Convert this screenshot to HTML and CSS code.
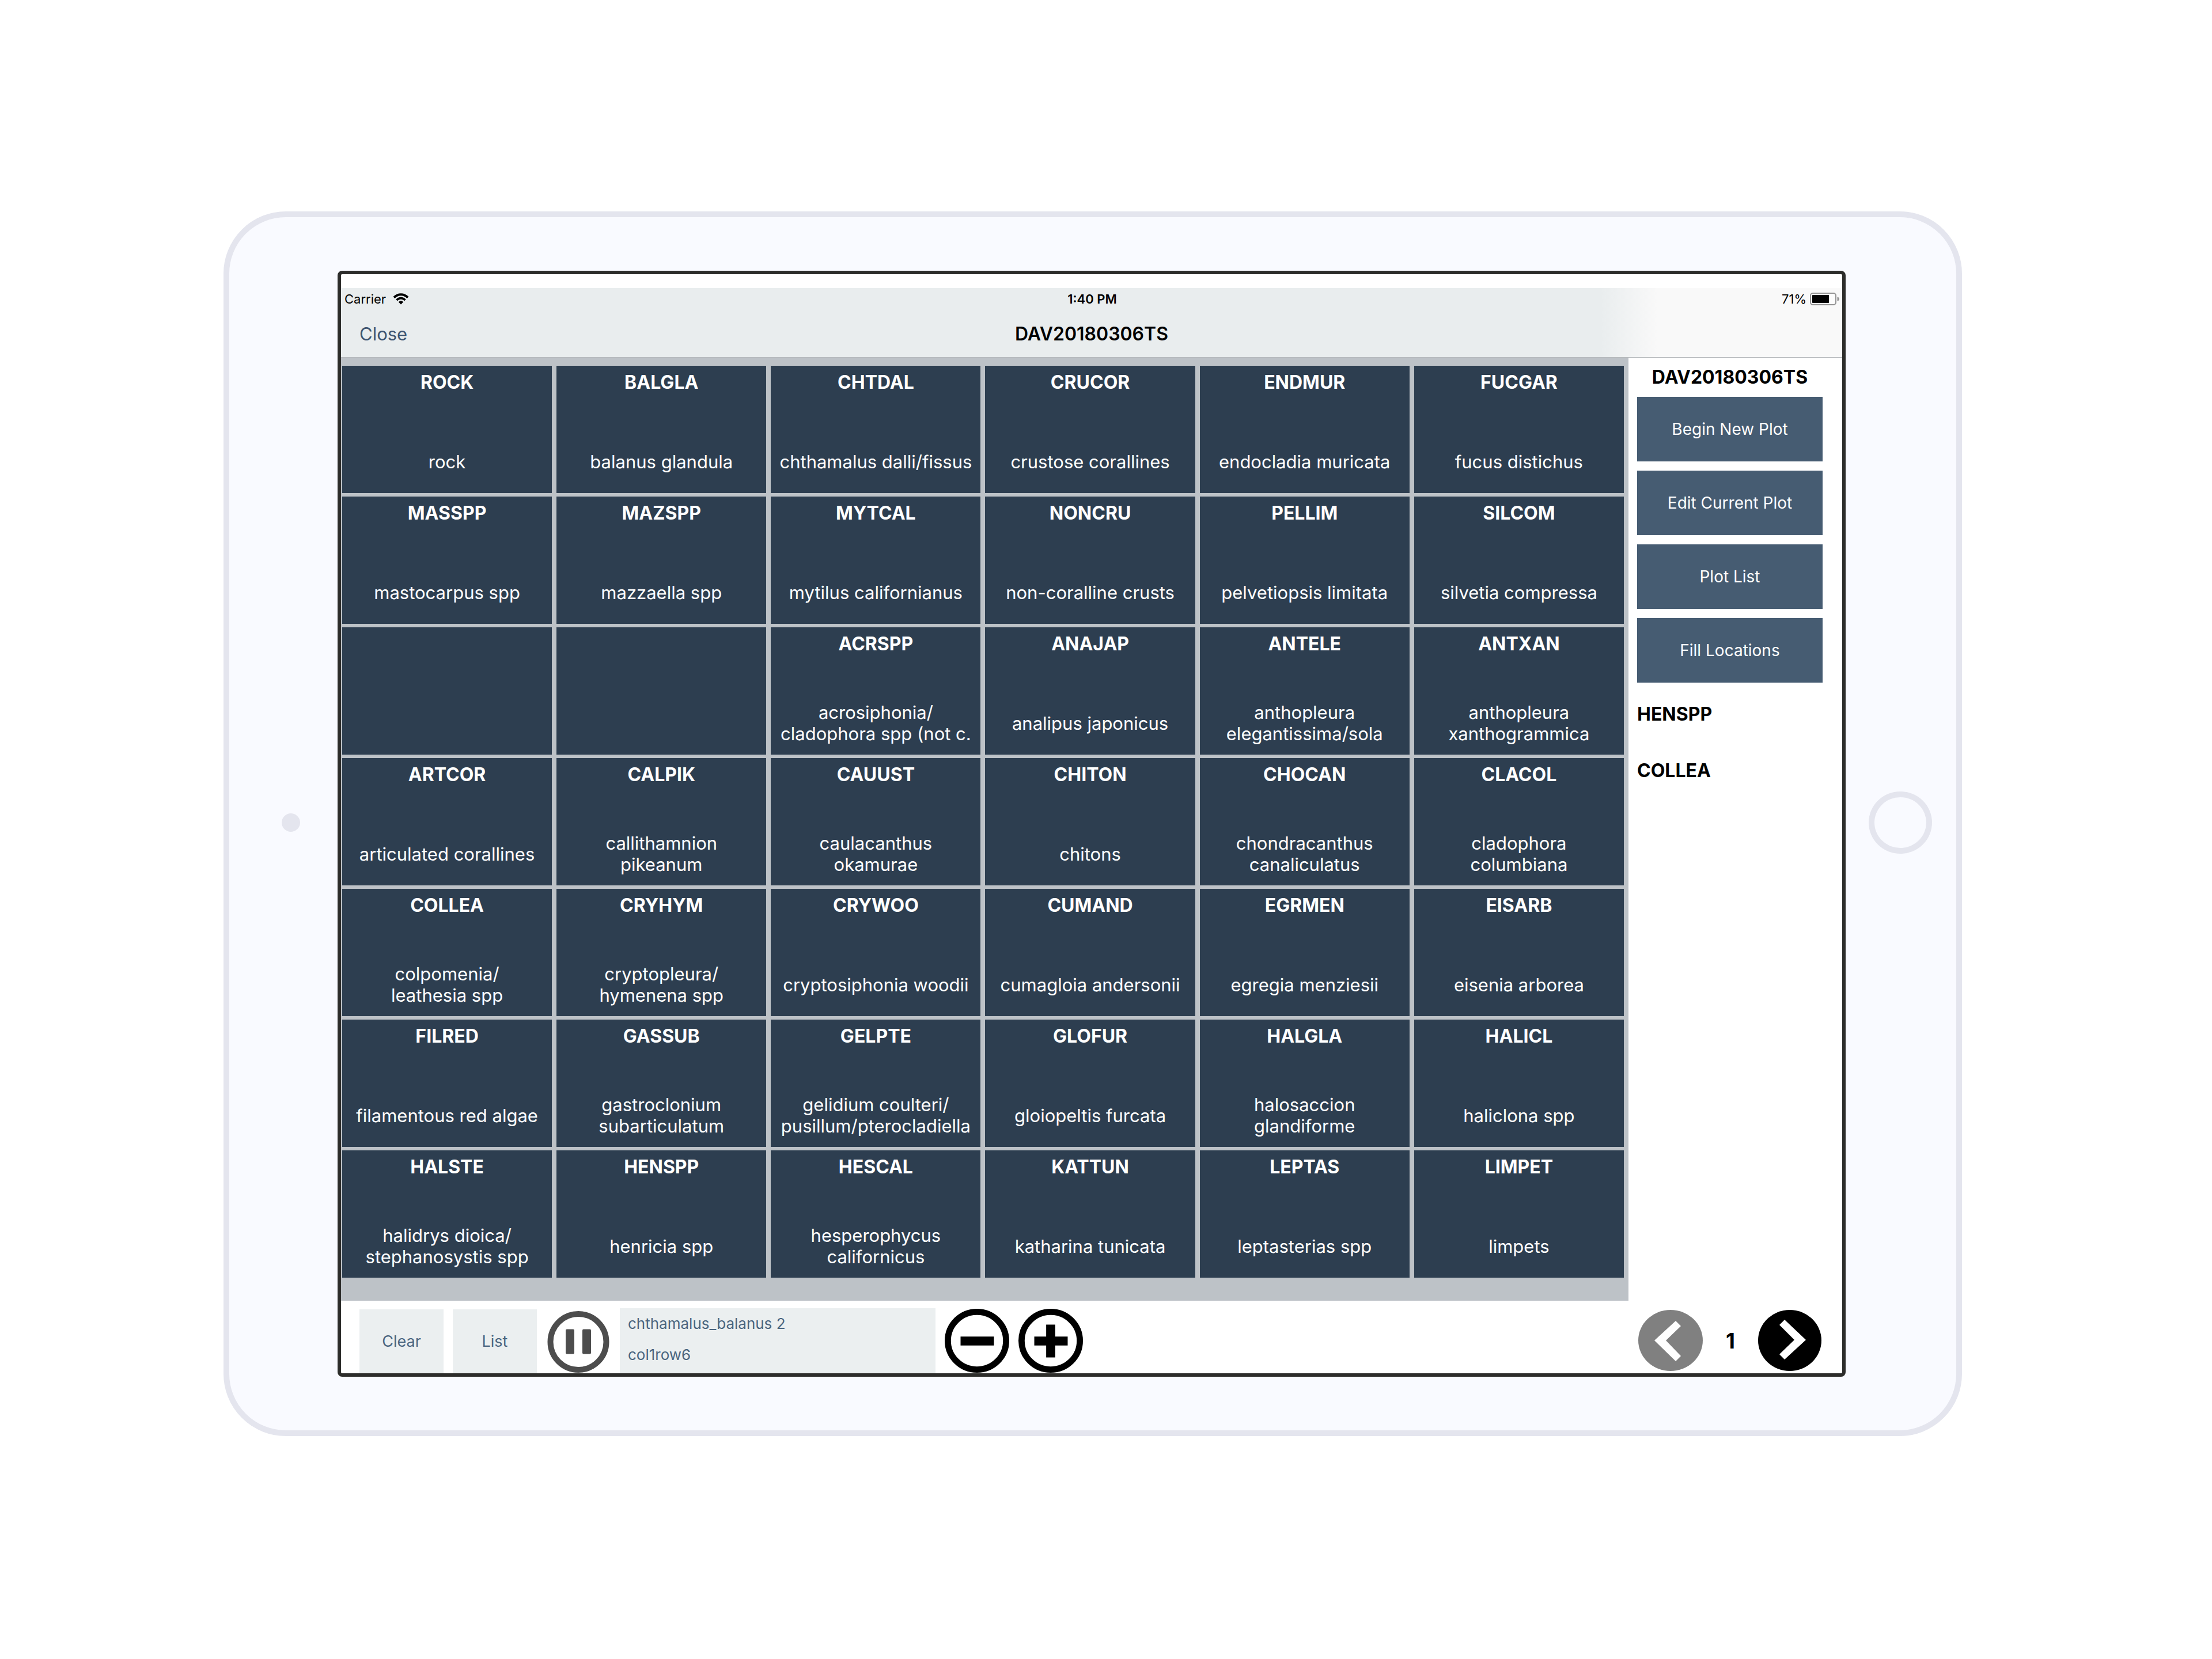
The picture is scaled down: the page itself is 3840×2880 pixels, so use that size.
FILE: index.html
```html
<!DOCTYPE html>
<html lang="en">
<head>
<meta charset="utf-8">
<title>DAV20180306TS</title>
<link rel="stylesheet" href="styles.css">
</head>
<body>
<div class="device">
  <div class="bezel bezel-left"><span class="camera"></span></div>
  <div class="screen">
    <header class="topbar">
      <div class="status">
        <div class="carrier">
          <span>Carrier</span>
          <svg class="wifi" viewBox="0 0 28 20" aria-hidden="true">
            <path d="M2 7.500C9 .5 19 .5 26 7.500" fill="none" stroke="#000" stroke-width="4"/>
            <path d="M6.500 12C11 7.500 17 7.500 21.500 12" fill="none" stroke="#000" stroke-width="3.600"/>
            <path d="M9.800 15.300C12 12.800 16 12.800 18.200 15.300L14 19.500Z" fill="#000"/>
          </svg>
        </div>
        <span class="clock">1:40 PM</span>
        <div class="power">
          <span>71%</span>
          <svg class="battery" viewBox="0 0 52 22" aria-hidden="true">
            <rect x="1" y="1" width="44" height="20" rx="4" fill="#fdfdfd" stroke="#939393" stroke-width="2"/>
            <rect x="4" y="4" width="29" height="14" rx="1" fill="#000"/>
            <path d="M47.500 7.500Q51 8 51 11T47.500 14.500Z" fill="#939393"/>
          </svg>
        </div>
      </div>
      <div class="nav">
        <button class="close" type="button">Close</button>
        <h1>DAV20180306TS</h1>
      </div>
    </header>

    <main class="content">
      <section class="tiles" aria-label="Species">
        <button class="tile" type="button"><strong>ROCK</strong><span>rock</span></button>
        <button class="tile" type="button"><strong>BALGLA</strong><span>balanus glandula</span></button>
        <button class="tile" type="button"><strong>CHTDAL</strong><span>chthamalus dalli/fissus</span></button>
        <button class="tile" type="button"><strong>CRUCOR</strong><span>crustose corallines</span></button>
        <button class="tile" type="button"><strong>ENDMUR</strong><span>endocladia muricata</span></button>
        <button class="tile" type="button"><strong>FUCGAR</strong><span>fucus distichus</span></button>

        <button class="tile" type="button"><strong>MASSPP</strong><span>mastocarpus spp</span></button>
        <button class="tile" type="button"><strong>MAZSPP</strong><span>mazzaella spp</span></button>
        <button class="tile" type="button"><strong>MYTCAL</strong><span>mytilus californianus</span></button>
        <button class="tile" type="button"><strong>NONCRU</strong><span>non-coralline crusts</span></button>
        <button class="tile" type="button"><strong>PELLIM</strong><span>pelvetiopsis limitata</span></button>
        <button class="tile" type="button"><strong>SILCOM</strong><span>silvetia compressa</span></button>

        <button class="tile" type="button" aria-label="Empty"></button>
        <button class="tile" type="button" aria-label="Empty"></button>
        <button class="tile" type="button"><strong>ACRSPP</strong><span>acrosiphonia/<br>cladophora spp (not c.</span></button>
        <button class="tile" type="button"><strong>ANAJAP</strong><span>analipus japonicus</span></button>
        <button class="tile" type="button"><strong>ANTELE</strong><span>anthopleura<br>elegantissima/sola</span></button>
        <button class="tile" type="button"><strong>ANTXAN</strong><span>anthopleura<br>xanthogrammica</span></button>

        <button class="tile" type="button"><strong>ARTCOR</strong><span>articulated corallines</span></button>
        <button class="tile" type="button"><strong>CALPIK</strong><span>callithamnion<br>pikeanum</span></button>
        <button class="tile" type="button"><strong>CAUUST</strong><span>caulacanthus<br>okamurae</span></button>
        <button class="tile" type="button"><strong>CHITON</strong><span>chitons</span></button>
        <button class="tile" type="button"><strong>CHOCAN</strong><span>chondracanthus<br>canaliculatus</span></button>
        <button class="tile" type="button"><strong>CLACOL</strong><span>cladophora<br>columbiana</span></button>

        <button class="tile" type="button"><strong>COLLEA</strong><span>colpomenia/<br>leathesia spp</span></button>
        <button class="tile" type="button"><strong>CRYHYM</strong><span>cryptopleura/<br>hymenena spp</span></button>
        <button class="tile" type="button"><strong>CRYWOO</strong><span>cryptosiphonia woodii</span></button>
        <button class="tile" type="button"><strong>CUMAND</strong><span>cumagloia andersonii</span></button>
        <button class="tile" type="button"><strong>EGRMEN</strong><span>egregia menziesii</span></button>
        <button class="tile" type="button"><strong>EISARB</strong><span>eisenia arborea</span></button>

        <button class="tile" type="button"><strong>FILRED</strong><span>filamentous red algae</span></button>
        <button class="tile" type="button"><strong>GASSUB</strong><span>gastroclonium<br>subarticulatum</span></button>
        <button class="tile" type="button"><strong>GELPTE</strong><span>gelidium coulteri/<br>pusillum/pterocladiella</span></button>
        <button class="tile" type="button"><strong>GLOFUR</strong><span>gloiopeltis furcata</span></button>
        <button class="tile" type="button"><strong>HALGLA</strong><span>halosaccion<br>glandiforme</span></button>
        <button class="tile" type="button"><strong>HALICL</strong><span>haliclona spp</span></button>

        <button class="tile" type="button"><strong>HALSTE</strong><span>halidrys dioica/<br>stephanosystis spp</span></button>
        <button class="tile" type="button"><strong>HENSPP</strong><span>henricia spp</span></button>
        <button class="tile" type="button"><strong>HESCAL</strong><span>hesperophycus<br>californicus</span></button>
        <button class="tile" type="button"><strong>KATTUN</strong><span>katharina tunicata</span></button>
        <button class="tile" type="button"><strong>LEPTAS</strong><span>leptasterias spp</span></button>
        <button class="tile" type="button"><strong>LIMPET</strong><span>limpets</span></button>
      </section>

      <aside class="side">
        <h2>DAV20180306TS</h2>
        <div class="actions">
          <button type="button">Begin New Plot</button>
          <button type="button">Edit Current Plot</button>
          <button type="button">Plot List</button>
          <button type="button">Fill Locations</button>
        </div>
        <ul class="recent">
          <li>HENSPP</li>
          <li>COLLEA</li>
        </ul>
      </aside>
    </main>

    <footer class="toolbar">
      <button class="soft" type="button">Clear</button>
      <button class="soft" type="button">List</button>
      <button class="icon" type="button" aria-label="Pause">
        <svg viewBox="0 0 112 113" aria-hidden="true">
          <circle cx="56" cy="58.500" r="48.500" fill="none" stroke="#4d4d4d" stroke-width="10"/>
          <rect x="34" y="36.500" width="15" height="43" rx="2" fill="#4d4d4d"/>
          <rect x="63" y="36.500" width="15" height="43" rx="2" fill="#4d4d4d"/>
        </svg>
      </button>
      <div class="location">
        <p>chthamalus_balanus 2</p>
        <p>col1row6</p>
      </div>
      <button class="icon" type="button" aria-label="Decrease">
        <svg viewBox="0 0 114 113" aria-hidden="true">
          <ellipse cx="57" cy="56.500" rx="51.500" ry="51" fill="none" stroke="#000" stroke-width="11"/>
          <path d="M28 49H87V65H28Z"/>
        </svg>
      </button>
      <button class="icon" type="button" aria-label="Increase">
        <svg viewBox="0 0 114 113" aria-hidden="true">
          <ellipse cx="57" cy="56.500" rx="51.500" ry="51" fill="none" stroke="#000" stroke-width="11"/>
          <path d="M28 49H49V28H65V49H87V65H65V86H49V65H28Z"/>
        </svg>
      </button>
      <div class="pager">
        <button class="icon" type="button" aria-label="Previous page">
          <svg viewBox="0 0 112 106" aria-hidden="true">
            <ellipse cx="56" cy="53" rx="56" ry="53" fill="#808080"/>
            <path d="M65 19L74 28L48 53L74 80L65 89L28 53Z" fill="#fff"/>
          </svg>
        </button>
        <span>1</span>
        <button class="icon" type="button" aria-label="Next page">
          <svg viewBox="0 0 112 106" aria-hidden="true">
            <ellipse cx="55" cy="53" rx="55" ry="53" fill="#000"/>
            <path d="M46 17L83 52L46 86L37 77L63 52L37 26Z" fill="#fff"/>
          </svg>
        </button>
      </div>
    </footer>
  </div>
  <div class="bezel bezel-right"><span class="home"></span></div>
</div>
</body>
</html>
```
FILE: styles.css
```css
* {
  box-sizing: border-box;
}

body {
  margin: 0;
  padding: 367px 434px 387px 388px;
  background: #fff;
  color: #000;
  font-family: Inter, "Liberation Sans", sans-serif;
}

h1,
h2,
p,
ul {
  margin: 0;
  padding: 0;
}

button {
  margin: 0;
  padding: 0;
  border: 0;
  border-radius: 0;
  background: none;
  color: inherit;
  font: inherit;
  cursor: pointer;
}

svg {
  display: block;
}

/* Tablet frame */
.device {
  display: grid;
  grid-template-columns: 188px 1fr 192px;
  padding: 93px 0;
  border: 10px solid #e4e5ee;
  border-radius: 108px;
  background: #f9faff;
}

.bezel {
  display: flex;
  align-items: center;
  justify-content: center;
  padding-bottom: 4px;
}

.bezel-left {
  justify-content: flex-end;
  padding-right: 65px;
}

.bezel-right {
  padding-right: 3px;
}

.camera {
  width: 32px;
  height: 32px;
  border-radius: 50%;
  background: #e4e5ee;
}

.home {
  width: 110px;
  height: 108px;
  border: 10px solid #e4e5ee;
  border-radius: 50%;
}

.screen {
  padding-top: 24px;
  border: 6px solid #2d2d2b;
  border-radius: 8px;
  background: #fff;
  overflow: hidden;
}

/* Status and navigation bars */
.topbar {
  border-bottom: 1px solid #b5b9bc;
  background: linear-gradient(to right, #e9edee calc(100% - 420px), #f9f9f9 calc(100% - 320px));
}

.status {
  display: grid;
  grid-template-columns: 1fr auto 1fr;
  align-items: center;
  height: 38px;
  padding: 0 4px 0 6px;
  font-size: 22px;
}

.carrier,
.power {
  display: flex;
  align-items: center;
  gap: 12px;
}

.power {
  justify-content: flex-end;
  gap: 6px;
}

.wifi {
  width: 28px;
  height: 20px;
}

.battery {
  width: 52px;
  height: 22px;
}

.clock {
  font-weight: 600;
}

.nav {
  display: grid;
  grid-template-columns: 1fr auto 1fr;
  align-items: center;
  height: 82px;
  padding: 0 32px;
}

.nav h1 {
  font-size: 32px;
  font-weight: 600;
}

.close {
  justify-self: start;
  color: #3e5570;
  font-size: 31px;
}

/* Species tiles */
.content {
  display: grid;
  grid-template-columns: 1fr 371px;
}

.tiles {
  display: grid;
  grid-template-columns: repeat(6, 1fr);
  grid-auto-rows: 221px;
  gap: 6px 8px;
  padding: 14px 8px 40px 2px;
  background: #bdc2c7;
}

.tile {
  display: flex;
  flex-direction: column;
  align-items: center;
  justify-content: space-between;
  padding: 10px 0 18px;
  background: #2d3e50;
  color: #fff;
  line-height: 37px;
}

.tile strong {
  font-size: 32px;
  font-weight: 700;
}

.tile span {
  display: flex;
  align-items: center;
  min-height: 74px;
  font-size: 31px;
  white-space: nowrap;
}

/* Side panel */
.side {
  padding: 0 34px 0 15px;
}

.side h2 {
  font-size: 32px;
  line-height: 68px;
  text-align: center;
}

.actions {
  display: grid;
  grid-auto-rows: 112px;
  gap: 16px;
}

.actions button {
  background: #465c72;
  color: #fff;
  font-size: 28px;
}

.recent {
  margin-top: 6px;
  font-size: 32px;
  font-weight: 700;
  line-height: 98px;
  list-style: none;
}

/* Bottom toolbar */
.toolbar {
  display: flex;
  align-items: flex-end;
  gap: 16px;
  height: 126px;
  padding: 0 34px 0 32px;
}

.soft {
  width: 146px;
  height: 111px;
  background: #ebeff0;
  color: #4a657f;
  font-size: 27px;
}

.icon svg {
  width: 112px;
  height: 113px;
}

.location {
  width: 548px;
  height: 113px;
  padding-left: 14px;
  background: #ebeff0;
  color: #4a657f;
  font-size: 26px;
  line-height: 54px;
}

.pager {
  display: flex;
  align-items: center;
  justify-content: space-between;
  width: 320px;
  margin-left: auto;
  padding-bottom: 4px;
  font-size: 37px;
  font-weight: 700;
}

.pager svg {
  width: 112px;
  height: 106px;
}
```
